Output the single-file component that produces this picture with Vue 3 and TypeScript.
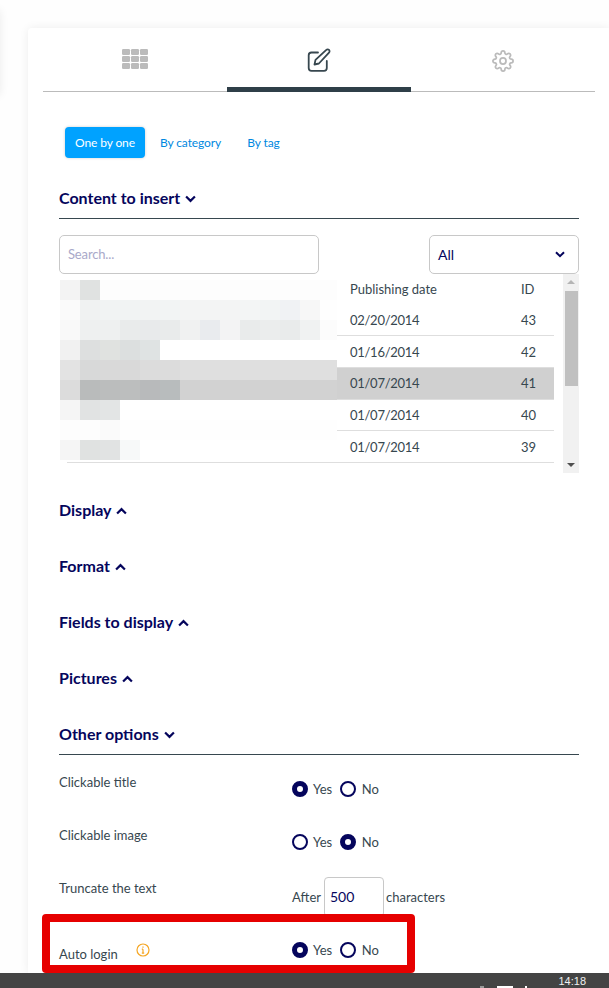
<script setup lang="ts">
interface Row { date: string; id: number; selected?: boolean }
const rows: Row[] = [
  { date: '02/20/2014', id: 43 },
  { date: '01/16/2014', id: 42 },
  { date: '01/07/2014', id: 41, selected: true },
  { date: '01/07/2014', id: 40 },
  { date: '01/07/2014', id: 39 },
]
const W = '#fefefe'
const fill = (first: string[], color: string) => [...first, ...Array(14 - first.length).fill(color)]
const mosaic: string[][] = [
  fill(['#f3f3f3', '#e0e2e1'], '#fdfdfd'),
  fill(['#fafafa', '#f0f2f2', '#f1f3f3', '#f1f3f3', '#f2f3f3', '#f2f4f4', '#f3f4f4', '#f3f4f4', '#f3f4f4', '#f3f5f5', '#f2f4f4', '#f0f2f4', '#f7f7f7'], '#fefefe'),
  fill(['#f9f9f9', '#eef0f0', '#eef0f0', '#e9ebeb', '#e8eaeb', '#e9ebeb', '#f0f1f1', '#e9ebee', '#f3f3f4', '#e9ebeb', '#ebeded', '#e9ebeb', '#f0f2f2'], '#fcfcfc'),
  fill(['#f1f1f1', '#dddfdf', '#e0e2e0', '#dcdfdf', '#dfe3e3'], '#ffffff'),
  fill(['#e3e3e3', '#d8d9d9', '#d9d9d9', '#d9d9d9', '#dcdcdc', '#dcdcdc'], '#dfdfdf'),
  fill(['#dcdcdc', '#b9bbbb', '#bbbdbd', '#bcbebe', '#b8babb', '#b8bcbd'], '#d2d2d2'),
  fill(['#f5f5f5', '#e1e3e3', '#e3e5e5'], '#ffffff'),
  fill(['#fdfdfd', '#fdfdfd', '#fafafa'], W),
  fill(['#f5f5f5', '#e0e2e1', '#e1e3e3', '#f7f9f9'], '#ffffff'),
]
const collapsed = ['Display', 'Format', 'Fields to display', 'Pictures']
</script>

<template>
  <div class="page">
    <div class="ghost"></div>
    <main class="card">
      <nav class="tabs">
        <div class="tab">
          <svg width="26" height="20" viewBox="0 0 26 20" fill="#bbbbbb">
            <rect x="0" y="0" width="8" height="6" rx="1.2" /><rect x="9" y="0" width="8" height="6" rx="1.2" /><rect x="18" y="0" width="8" height="6" rx="1.2" />
            <rect x="0" y="7" width="8" height="6" rx="1.2" /><rect x="9" y="7" width="8" height="6" rx="1.2" /><rect x="18" y="7" width="8" height="6" rx="1.2" />
            <rect x="0" y="14" width="8" height="6" rx="1.2" /><rect x="9" y="14" width="8" height="6" rx="1.2" /><rect x="18" y="14" width="8" height="6" rx="1.2" />
          </svg>
        </div>
        <div class="tab active">
          <svg class="pen" width="24" height="24" viewBox="0 0 24 24" fill="none" stroke="#37474f" stroke-width="1.8" stroke-linejoin="round" stroke-linecap="round">
            <path d="M11 4.5H4.5A2.8 2.8 0 0 0 1.700 7.300V20a2.800 2.800 0 0 0 2.800 2.800H17a2.800 2.800 0 0 0 2.800-2.800v-7" />
            <path d="M7.500 16.500l1-4.600L19.300 1.900a1.900 1.900 0 0 1 2.700 0 1.900 1.900 0 0 1 0 2.700L11.900 15.500z" />
          </svg>
        </div>
        <div class="tab">
          <svg class="gear" width="22" height="22" viewBox="0 0 24 24" fill="none" stroke="#bbbbbb" stroke-width="1.900" stroke-linejoin="round" stroke-linecap="round">
            <circle cx="12" cy="12" r="3.300" />
            <path d="M19.400 15a1.650 1.650 0 0 0 .33 1.820l.06.06a2 2 0 0 1 0 2.830 2 2 0 0 1-2.830 0l-.06-.06a1.650 1.650 0 0 0-1.820-.33 1.650 1.650 0 0 0-1 1.510V21a2 2 0 0 1-2 2 2 2 0 0 1-2-2v-.09A1.650 1.650 0 0 0 9 19.400a1.650 1.650 0 0 0-1.820.33l-.06.06a2 2 0 0 1-2.830 0 2 2 0 0 1 0-2.830l.06-.06a1.650 1.650 0 0 0 .33-1.820 1.650 1.650 0 0 0-1.510-1H3a2 2 0 0 1-2-2 2 2 0 0 1 2-2h.09A1.650 1.650 0 0 0 4.600 9a1.650 1.650 0 0 0-.33-1.820l-.06-.06a2 2 0 0 1 0-2.830 2 2 0 0 1 2.830 0l.06.06a1.650 1.650 0 0 0 1.820.33H9a1.650 1.650 0 0 0 1-1.510V3a2 2 0 0 1 2-2 2 2 0 0 1 2 2v.09a1.650 1.650 0 0 0 1 1.510 1.650 1.650 0 0 0 1.820-.33l.06-.06a2 2 0 0 1 2.830 0 2 2 0 0 1 0 2.830l-.06.06a1.650 1.650 0 0 0-.33 1.820V9a1.650 1.650 0 0 0 1.510 1H21a2 2 0 0 1 2 2 2 2 0 0 1-2 2h-.09a1.650 1.650 0 0 0-1.510 1z" />
          </svg>
        </div>
      </nav>

      <div class="content">
        <div class="pills">
          <span class="pill on">One by one</span>
          <span class="pill">By category</span>
          <span class="pill">By tag</span>
        </div>

        <h2 class="heading open first">
          Content to insert
          <svg class="chev" width="11" height="8" viewBox="0 0 10 7" fill="none" stroke="#05055c" stroke-width="2"><path d="M1 1.200l4 4 4-4" /></svg>
        </h2>

        <div class="filters">
          <div class="search">Search...</div>
          <div class="select">
            <span>All</span>
            <svg width="10" height="7" viewBox="0 0 10 7" fill="none" stroke="#05055c" stroke-width="2"><path d="M1 1.200l4 4 4-4" /></svg>
          </div>
        </div>

        <div class="table-wrap">
          <div class="table">
            <div class="thead"><span class="c-date">Publishing date</span><span class="c-id">ID</span></div>
            <div v-for="r in rows" :key="r.id" class="tr" :class="{ selected: r.selected }">
              <span class="c-date">{{ r.date }}</span><span class="c-id">{{ r.id }}</span>
            </div>
          </div>
          <div class="scrollbar">
            <i class="arrow up"></i>
            <div class="thumb"></div>
            <i class="arrow down"></i>
          </div>
          <div class="mosaic">
            <template v-for="(line, y) in mosaic" :key="y">
              <b v-for="(c, x) in line" :key="x" :style="{ background: c }"></b>
            </template>
          </div>
        </div>

        <h2 v-for="(s, i) in collapsed" :key="s" class="heading" :class="{ top: i === 0 }">
          {{ s }}
          <svg class="chev" width="11" height="8" viewBox="0 0 10 7" fill="none" stroke="#05055c" stroke-width="2"><path d="M1 5.800l4-4 4 4" /></svg>
        </h2>

        <h2 class="heading open">
          Other options
          <svg class="chev" width="11" height="8" viewBox="0 0 10 7" fill="none" stroke="#05055c" stroke-width="2"><path d="M1 1.200l4 4 4-4" /></svg>
        </h2>

        <div class="opt first-opt">
          <label class="lbl">Clickable title</label>
          <div class="ctl"><i class="radio on"></i><span>Yes</span><i class="radio"></i><span>No</span></div>
        </div>
        <div class="opt">
          <label class="lbl">Clickable image</label>
          <div class="ctl"><i class="radio"></i><span>Yes</span><i class="radio on"></i><span>No</span></div>
        </div>
        <div class="opt trunc">
          <label class="lbl">Truncate the text</label>
          <div class="ctl"><span>After</span><span class="num">500</span><span>characters</span></div>
        </div>
        <div class="opt auto">
          <label class="lbl">Auto login
            <svg class="info" width="14" height="14" viewBox="0 0 14 14" fill="none" stroke="#f5a623" stroke-width="1.200">
              <circle cx="7" cy="7" r="6" /><path d="M7 6.200v4M5.800 10.200h2.400M5.800 6.200H7" /><path d="M7 3.600v1.200" />
            </svg>
          </label>
          <div class="ctl"><i class="radio on"></i><span>Yes</span><i class="radio"></i><span>No</span></div>
        </div>
      </div>
    </main>
    <div class="redbox"></div>
    <footer class="taskbar">
      <i class="tray t1"></i><i class="tray t2"></i><i class="tray t3"></i>
      <span class="clock">14:18</span>
    </footer>
  </div>
</template>

<style>
html, body { margin: 0; overflow: hidden; }
</style>

<style scoped>
.page {
  position: relative;
  height: 988px;
  width: 609px;
  overflow: hidden;
  display: flex;
  flex-direction: column;
  background: #fefefe;
  font-family: Lato, "Liberation Sans", sans-serif;
  font-size: 13px;
  color: #37474f;
}
.ghost {
  position: absolute;
  left: -30px;
  top: 10px;
  width: 30px;
  height: 85px;
  background: #fff;
  box-shadow: 0 0 10px rgba(0, 0, 0, .08);
}
.card {
  flex: 1;
  min-height: 0;
  margin: 28px 0 0 28px;
  padding: 0 14px 0 15px;
  background: #fff;
  border-radius: 4px 0 0 0;
  box-shadow: 0 0 10px rgba(0, 0, 0, .07);
  overflow: hidden;
}
.tabs {
  display: grid;
  grid-template-columns: 184px 184px 184px;
  height: 64px;
  border-bottom: 1px solid #bbbbbb;
  box-sizing: border-box;
}
.tab {
  display: flex;
  justify-content: center;
  padding-top: 21px;
  box-sizing: border-box;
  height: 64px;
}
.tab.active {
  border-bottom: 5px solid #2f3f48;
}
.tab .pen { margin-top: -1px; }
.tab .gear { margin-top: 1px; }
.content { padding: 0 16px; }
.pills { display: flex; margin: 35px 0 0 6px; gap: 5px; }
.pill {
  height: 31px;
  line-height: 31px;
  padding: 0 10px;
  font-size: 12px;
  color: #0088e0;
  border-radius: 4px;
  letter-spacing: -.1px;
}
.pill:last-child { margin-left: 1px; }
.pill.on {
  background: #00a2ff;
  color: #fff;
  box-shadow: 0 0 3px rgba(0, 0, 0, .2);
}
.heading {
  margin: 0 0 36px;
  font-size: 16px;
  font-weight: 700;
  line-height: 20px;
  color: #05055c;
}
.heading.top { margin-top: 27px; }
.heading.first { margin-top: 30px; }
.heading.open {
  margin-bottom: 0;
  padding-bottom: 10px;
  border-bottom: 1px solid #37474f;
}
.chev { margin-left: 1px; vertical-align: 1.500px; }
.filters {
  display: flex;
  justify-content: space-between;
  margin-top: 16px;
}
.search, .select {
  box-sizing: border-box;
  height: 39px;
  border: 1px solid #c8c8c8;
  border-radius: 5px;
  display: flex;
  align-items: center;
  padding: 0 8px;
}
.search { width: 260px; color: #a9a9c9; letter-spacing: -.15px; padding-bottom: 1px; }
.select {
  width: 150px;
  justify-content: space-between;
  font-size: 14px;
  color: #05055c;
  padding-right: 13px;
}
.table-wrap {
  position: relative;
  display: flex;
  height: 199px;
}
.table { width: 495px; box-sizing: border-box; padding-left: 8px; }
.thead {
  display: flex;
  height: 30.500px;
  align-items: center;
}
.tr {
  display: flex;
  height: 31.700px;
  box-sizing: border-box;
  align-items: center;
  padding-top: 1px;
  border-bottom: 1px solid #dedede;
}
.tr .c-date { letter-spacing: -.28px; }
.tr.selected { background: #d0d0d0; padding-top: 0; }
.c-date { margin-left: 283px; width: 171px; }
.c-id { flex: 1; letter-spacing: -.1px; }
.scrollbar {
  margin-left: 9px;
  width: 16px;
  height: 199px;
  background: #f1f1f1;
  position: relative;
}
.thumb {
  position: absolute;
  left: 1.500px;
  top: 17px;
  width: 13px;
  height: 95px;
  background: #c0c0c0;
}
.arrow {
  position: absolute;
  left: 4px;
  width: 0;
  height: 0;
  border-left: 4px solid transparent;
  border-right: 4px solid transparent;
}
.arrow.up { top: 6px; border-bottom: 4px solid #b5b5b5; }
.arrow.down { bottom: 6px; border-top: 4px solid #505050; }
.mosaic {
  position: absolute;
  left: 1px;
  top: 6px;
  width: 277px;
  height: 180px;
  overflow: hidden;
  display: grid;
  grid-template-columns: repeat(14, 20px);
  grid-auto-rows: 20px;
}
.opt {
  display: grid;
  grid-template-columns: 232.500px 1fr;
  height: 53px;
}
.first-opt { margin-top: 17px; }
.lbl { line-height: 20px; }
.ctl {
  display: flex;
  align-items: center;
  height: 20px;
  margin-top: 7px;
}
.ctl span { margin-right: 7px; }
.radio {
  box-sizing: border-box;
  width: 16px;
  height: 16px;
  border-radius: 50%;
  border: 2px solid #05055c;
  margin: 0 5.500px 0 0;
  flex: none;
}
.ctl span + .radio { margin-left: 1px; }
.radio.on {
  border-width: 5px;
}
.trunc .ctl { margin-top: -1px; height: 40px; margin-left: .5px; }
.trunc .ctl span { margin-right: 2px; }
.trunc .ctl span:first-child { margin-right: 3px; }
.num {
  box-sizing: border-box;
  width: 60px;
  height: 40px;
  line-height: 38px;
  padding-left: 5px;
  border: 1px solid #c8c8c8;
  border-radius: 4px;
  font-size: 14px;
  color: #05055c;
}
.auto .lbl { padding-top: 23px; position: relative; }
.auto .ctl { margin-top: 19px; }
.auto { margin-top: -10px; }
.info { position: absolute; left: 77px; top: 22px; }
.redbox {
  position: absolute;
  left: 42px;
  top: 914px;
  width: 373px;
  height: 59px;
  box-sizing: border-box;
  border: 8.500px solid #e60000;
  border-radius: 4px;
}
.taskbar {
  position: relative;
  flex: none;
  height: 15px;
  background: #444444;
  display: flex;
  justify-content: flex-end;
  overflow: hidden;
}
.clock {
  color: #f0f0f0;
  font-family: "Liberation Sans", sans-serif;
  font-size: 11px;
  line-height: 13px;
  margin: 2px 23px 0 0;
}
.tray { position: absolute; top: 13px; height: 4px; background: #fff; }
.t1 { left: 480px; width: 4px; background: #999; }
.t2 { left: 497px; width: 16px; }
.t3 { left: 525px; width: 2px; }
</style>
